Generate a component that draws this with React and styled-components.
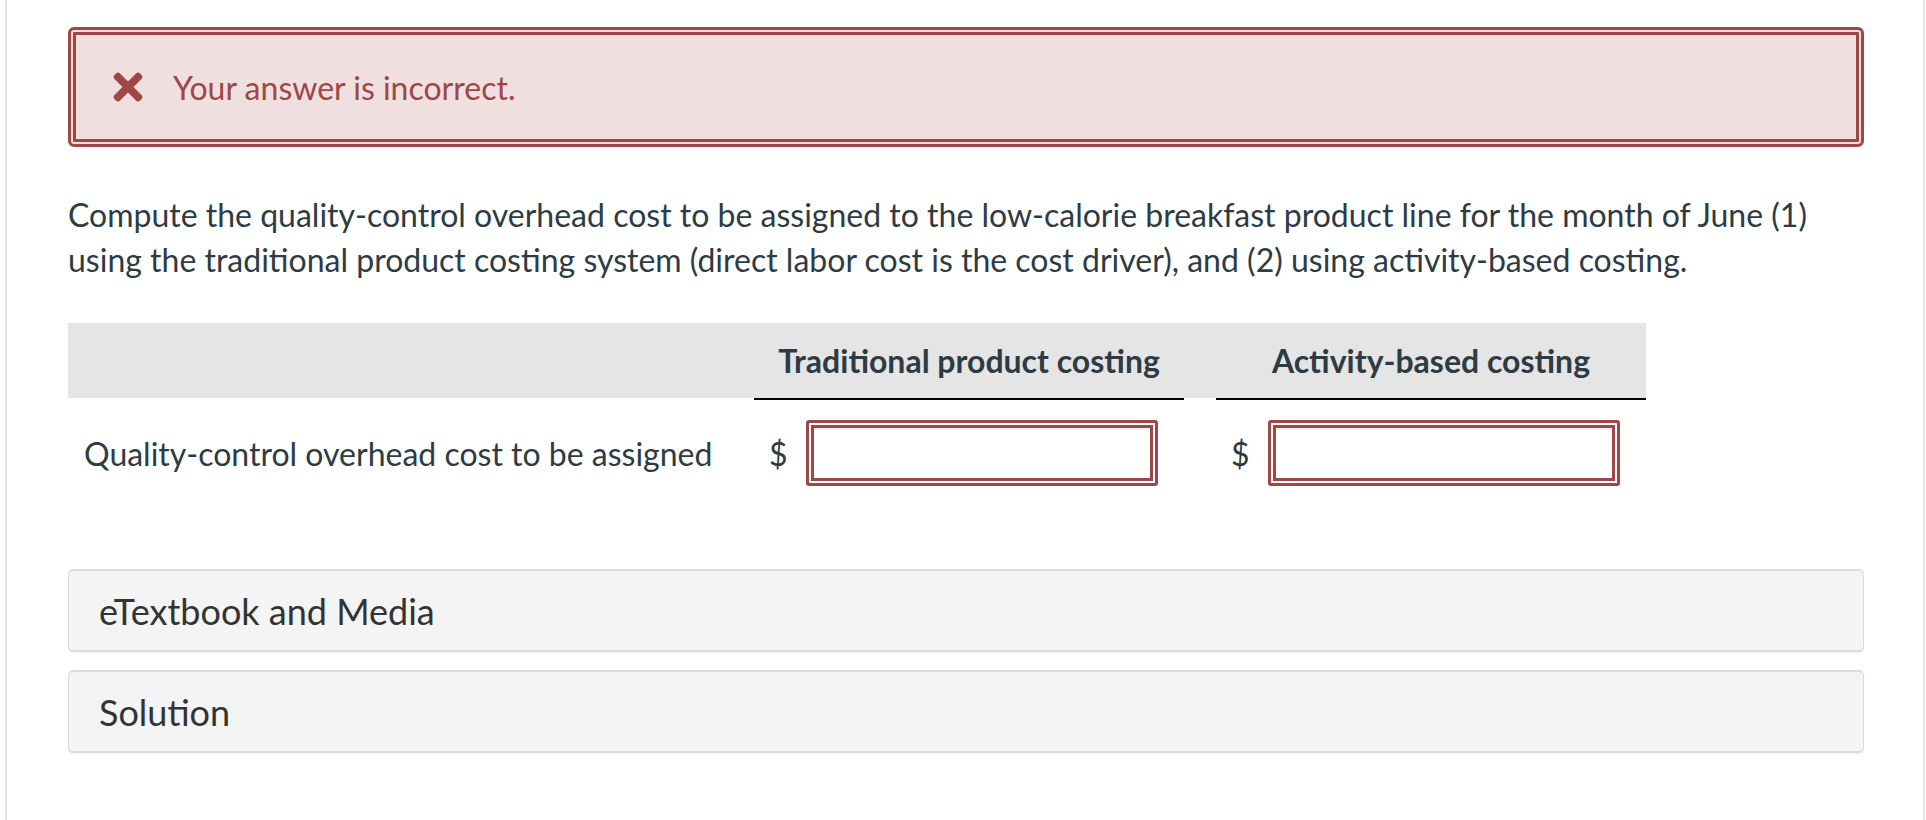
import React from "react";
import { styled, createGlobalStyle } from "styled-components";
import { FaTimes } from "react-icons/fa";

const GlobalStyle = createGlobalStyle`
    html, body {
        margin: 0;
        padding: 0;
        background: #fff;
        font-family: Lato, "Open Sans", sans-serif;
    }
`;

// Página com as linhas laterais
const Page = styled.div`
    box-sizing: border-box;
    margin-left: 5px;
    width: 1920px;
    min-height: 820px;
    border-left: 2px solid #e4e4e4;
    border-right: 2px solid #e4e4e4;
    padding: 27px 59px 0 61px;
`;

// Caixa de erro
const Alert = styled.div`
    box-sizing: border-box;
    height: 120px;
    display: flex;
    align-items: center;
    gap: 24px;
    padding-left: 31px;
    border: 8px double #9f4646;
    border-radius: 6px;
    background: #f0dfdf;
    color: #9f4646;
    font-size: 32px;
`;

const Question = styled.p`
    margin: 45px 0 41px;
    font-size: 32px;
    line-height: 45px;
    color: #2d3b45;
`;

const HeadRow = styled.div`
    display: grid;
    grid-template-columns: 686px 430px 462px;
    width: 1578px;
    background: #e5e5e5;
    height: 75px;
`;

const HeadCell = styled.div`
    display: flex;
    align-items: center;
    justify-content: center;
    margin-left: ${(props) => (props.offset ? "32px" : "0")};
    margin-bottom: -2px;
    font-size: 32px;
    font-weight: bold;
    color: #2d3b45;
    border-bottom: ${(props) => (props.line ? "2px solid #000" : "none")};
`;

const BodyRow = styled.div`
    display: grid;
    grid-template-columns: 686px 430px 462px;
    align-items: center;
    padding: 22px 0;
    color: #2d3b45;
    font-size: 32px;
`;

const Label = styled.div`
    padding-left: 16px;
`;

const AmountCell = styled.div`
    display: flex;
    align-items: center;
    gap: 18px;
    padding-left: ${(props) => (props.offset ? "47px" : "15px")};
`;

const Input = styled.input`
    box-sizing: border-box;
    width: 352px;
    height: 66px;
    border: 8px double #9f4646;
    border-radius: 3px;
    background: #fff;
    box-shadow: inset 0 2px 2px rgba(0, 0, 0, 0.06);
    outline: none;
`;

const Panels = styled.div`
    display: flex;
    flex-direction: column;
    gap: 18px;
    margin-top: 61px;
`;

const Panel = styled.div`
    box-sizing: border-box;
    height: 83px;
    display: flex;
    align-items: center;
    padding-left: 30px;
    border: 1px solid #dcdcdc;
    border-top-width: 2px;
    border-bottom-width: 2px;
    border-radius: 5px;
    background: #f4f4f4;
    box-shadow: 0 2px 2px rgba(0, 0, 0, 0.04);
    font-size: 36px;
    color: #333;
`;

const App = () => {
    return (
        <>
            <GlobalStyle />
            <Page>
                <Alert>
                    <FaTimes size={42} />
                    <span>Your answer is incorrect.</span>
                </Alert>

                <Question>
                    Compute the quality-control overhead cost to be assigned to the low-calorie breakfast product line for the month of June (1) using the traditional product costing system (direct labor cost is the cost driver), and (2) using activity-based costing.
                </Question>

                <HeadRow>
                    <HeadCell></HeadCell>
                    <HeadCell line>Traditional product costing</HeadCell>
                    <HeadCell line offset>Activity-based costing</HeadCell>
                </HeadRow>
                <BodyRow>
                    <Label>Quality-control overhead cost to be assigned</Label>
                    <AmountCell>
                        $ <Input type="text" />
                    </AmountCell>
                    <AmountCell offset>
                        $ <Input type="text" />
                    </AmountCell>
                </BodyRow>

                <Panels>
                    <Panel>eTextbook and Media</Panel>
                    <Panel>Solution</Panel>
                </Panels>
            </Page>
        </>
    );
};

export default App;
